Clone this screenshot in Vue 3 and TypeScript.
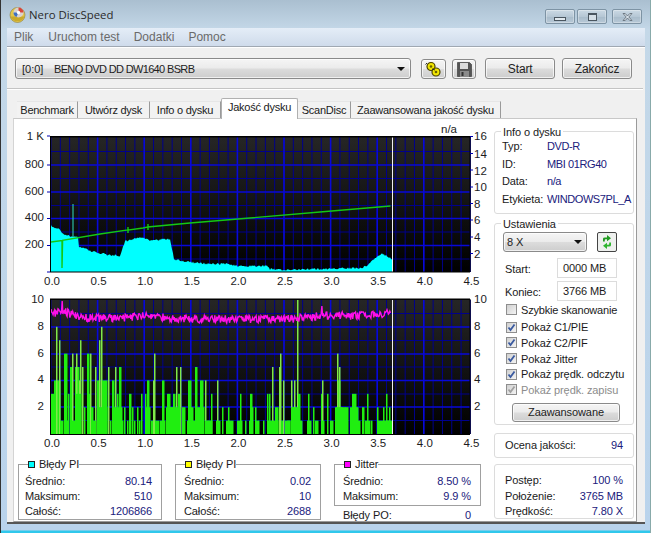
<script setup lang="ts">
import { computed } from "vue";

// cyan PI error area, page coordinates
const piOutline: [number, number][] = [
  [51, 225], [54, 226], [58, 228], [60, 229], [63, 232], [66, 234], [70, 235], [74, 236], [78, 236],
  [78.5, 246], [85, 247], [90, 250], [100, 252], [110, 254], [120, 255], [121.5, 250], [125, 240],
  [137, 237], [143, 237], [153, 240], [163, 238], [170, 238], [171.6, 246], [174, 258], [187, 261],
  [210, 263], [230, 263], [237, 265], [250, 265], [267, 265], [270, 268], [283, 269], [317, 268],
  [363, 267], [370, 262], [377, 255], [382, 253], [387, 255], [392, 258],
];

// green PIF bars as [from, to, value], x read from the plot
const pifBars: [number, number, number][] = [
  [50, 51, 2], [51, 54, 3], [54, 60, 4], [56, 57, 8], [59, 60, 7], [60, 63, 1], [64, 67, 6], [67, 68, 1], [68, 69, 3],
  [70, 72, 5], [72, 73, 6], [75, 79, 5], [76, 77, 6], [79, 80, 4], [80, 81, 7], [82, 83, 5], [84, 85, 2], [87, 89, 6],
  [89, 90, 3], [90, 91, 6], [91, 93, 2], [95, 96, 5], [97, 100, 4], [99, 100, 7], [101, 102, 8], [102, 107, 4],
  [108, 109, 5], [110, 111, 1], [112, 114, 4], [115, 116, 5], [117, 118, 3], [119, 121, 5], [122, 123, 1], [124, 125, 2],
  [127, 128, 1], [129, 131, 3], [132, 133, 2], [134, 135, 1], [137, 138, 2], [139, 140, 1], [141, 142, 3], [145, 146, 3],
  [147, 149, 4], [151, 153, 1], [153, 154, 4], [154, 155, 6], [155, 159, 1], [162, 164, 4], [167, 170, 3], [170, 175, 2],
  [173, 175, 3], [176, 177, 5], [178, 180, 3], [180, 181, 5], [182, 185, 2], [188, 191, 4], [191, 193, 2], [195, 197, 5],
  [200, 203, 4], [205, 206, 4], [207, 212, 1], [211, 212, 3], [217, 218, 4], [216, 220, 1], [222, 223, 2], [226, 233, 1],
  [228, 229, 2], [240, 241, 3], [237, 242, 1], [245, 246, 1], [249, 250, 1],
  [250, 252, 3], [252, 253, 2], [255, 256, 2], [258, 259, 1], [263, 264, 1], [267, 268, 3], [269, 270, 3], [268, 273, 1],
  [272, 273, 5], [275, 278, 2], [279, 280, 5], [280, 281, 6], [281, 283, 1], [283, 284, 4], [285, 290, 1], [291, 292, 4],
  [292, 296, 2], [294, 295, 4], [297, 298, 10], [298, 300, 3], [300, 302, 1], [307, 311, 1], [308, 309, 3], [313, 314, 2],
  [315, 318, 1], [321, 322, 3], [322, 323, 4], [322, 324, 1], [327, 328, 3], [330, 333, 1], [335, 337, 2], [337, 340, 4],
  [337, 338, 6], [339, 340, 5], [340, 342, 2], [345, 348, 2], [352, 356, 3], [356, 357, 2], [357, 360, 1], [362, 364, 2],
  [365, 370, 1], [367, 368, 3], [371, 372, 1], [377, 378, 2], [378, 383, 1], [383, 384, 2], [386, 387, 3], [389, 390, 2],
  [387, 392, 1],
  // low, dense parts between the spikes
  [75, 81, 3], [70, 75, 1], [93, 96, 1], [97, 107, 2], [112, 122, 2], [146, 150, 2], [160, 165, 1], [166, 180, 2],
  [187, 196, 1], [197, 204, 2], [205, 210, 1], [255, 258, 1], [272, 278, 1], [287, 290, 1], [291, 299, 2], [336, 345, 2],
  [350, 358, 2], [384, 390, 1],
];

const jitterMeans: [number, number][] = [
  [51, 311], [56, 313], [62, 309], [70, 313], [80, 317], [120, 317], [145, 315], [190, 318], [240, 318],
  [283, 318], [307, 317], [323, 314], [350, 315], [380, 313], [391, 312],
];

function lerp(points: [number, number][], x: number): number {
  for (let i = 1; i < points.length; i++) {
    if (x <= points[i][0]) {
      const [x0, y0] = points[i - 1];
      const [x1, y1] = points[i];
      return y0 + ((y1 - y0) * (x - x0)) / (x1 - x0);
    }
  }
  return points[points.length - 1][1];
}

let seed = 4711;
function rnd(): number {
  seed = (seed * 16807) % 2147483647;
  return seed / 2147483647;
}

const piPath = computed(() => {
  let d = "M51 271";
  for (let x = 51; x <= 392.5; x += 1) {
    d += ` L${x} ${(lerp(piOutline, x) + (rnd() - 0.5) * 2).toFixed(1)}`;
  }
  return d + " L392.5 271 Z";
});

const jitterPath = computed(() => {
  let d = "";
  for (let x = 51; x <= 391; x += 0.7) {
    let y = lerp(jitterMeans, x) + (rnd() - 0.5) * 8;
    if (Math.abs(x - 62) < 0.4) y = 300;
    if (Math.abs(x - 322) < 0.4) y = 305;
    d += `${d ? " L" : "M"}${x.toFixed(1)} ${y.toFixed(1)}`;
  }
  return d;
});

const speedPath = "M51 241 L62 239.5 L62 267 L62.6 239.4 L100 233 L128 229 L128 226 L128 232 L128 229 L143 227 L148 226 L148 223 L148 229 L148 226 L190 222 L250 217 L320 211 L390.5 205";

const xTicks = ["0.0", "0.5", "1.0", "1.5", "2.0", "2.5", "3.0", "3.5", "4.0", "4.5"].map((label, i) => ({
  label,
  x: 51 + i * 46.6,
}));
const minorX = Array.from({ length: 46 }, (_, i) => 51 + i * 9.32);

const tabs = ["Benchmark", "Utwórz dysk", "Info o dysku", "Jakość dysku", "ScanDisc", "Zaawansowana jakość dysku"];
const menu = ["Plik", "Uruchom test", "Dodatki", "Pomoc"];

const discInfo = [
  { label: "Typ:", value: "DVD-R" },
  { label: "ID:", value: "MBI 01RG40" },
  { label: "Data:", value: "n/a" },
  { label: "Etykieta:", value: "WINDOWS7PL_A" },
];

const checks = [
  { label: "Pokaż C1/PIE", off: false },
  { label: "Pokaż C2/PIF", off: false },
  { label: "Pokaż Jitter", off: false },
  { label: "Pokaż prędk. odczytu", off: false },
  { label: "Pokaż prędk. zapisu", off: true },
];

const statBoxes = [
  { title: "Błędy PI", color: "#00ffff", rows: [["Średnio:", "80.14"], ["Maksimum:", "510"], ["Całość:", "1206866"]] },
  { title: "Błędy PI", color: "#ffff00", rows: [["Średnio:", "0.02"], ["Maksimum:", "10"], ["Całość:", "2688"]] },
];
</script>

<template>
  <div class="window">
    <div class="titlebar">
      <svg class="app-icon" width="17" height="17" viewBox="0 0 17 17">
        <circle cx="8.5" cy="9" r="7.5" fill="#e3c64a" stroke="#8a7a3a" stroke-width="0.6" />
        <path d="M1.5 10.5a7.5 7.5 0 0 0 14 0z" fill="#c9a92c" />
        <circle cx="9.5" cy="6.5" r="5" fill="#d9d2cf" />
        <path d="M9.5 1.5a5 5 0 0 1 5 5h-5z" fill="#d8443a" />
        <path d="M9.5 6.5h-5a5 5 0 0 0 3 4.6z" fill="#3f6fc0" />
        <circle cx="9.5" cy="6.5" r="1.7" fill="#fff" />
      </svg>
      <span class="app-title">Nero DiscSpeed</span>
      <div class="win-buttons">
        <div class="win-btn"><span class="glyph-min"></span></div>
        <div class="win-btn"><span class="glyph-max"></span></div>
        <div class="win-btn close">
          <svg width="13" height="10" viewBox="0 0 13 10">
            <path d="M2 1.5h2.2L6.5 4l2.3-2.5H11L7.8 5 11 8.5H8.8L6.5 6 4.2 8.5H2L5.2 5z" fill="#d8e2ea" stroke="#5c6670" stroke-width="0.8" />
          </svg>
        </div>
      </div>
    </div>

    <div class="client">
      <div class="menubar">
        <span v-for="item in menu" :key="item">{{ item }}</span>
      </div>

      <div class="toolbar">
        <div class="combo drive">
          <span><span class="slot">[0:0]</span>BENQ DVD DD DW1640 BSRB</span>
          <i class="arrow"></i>
        </div>
        <button class="aero icon-btn first">
          <svg width="19" height="17" viewBox="0 0 19 17">
            <circle cx="7" cy="5.5" r="4" fill="#f2e600" stroke="#4b4300" stroke-width="1.2" />
            <circle cx="12" cy="11" r="4" fill="#f2e600" stroke="#4b4300" stroke-width="1.2" />
            <circle cx="7" cy="5.5" r="1.3" fill="#6b6200" />
            <circle cx="12" cy="11" r="1.3" fill="#6b6200" />
            <path d="M3 2 1.5 3.5M11 9l-3-1" stroke="#2c2c2c" stroke-width="1" />
          </svg>
        </button>
        <button class="aero icon-btn second">
          <svg width="15" height="15" viewBox="0 0 15 15">
            <path d="M.5.5h12l2 2v12H.5z" fill="#555" stroke="#333" stroke-width="0.6" />
            <rect x="3" y="1" width="8" height="6" fill="#dcdcdc" />
            <rect x="3" y="9" width="9" height="6" fill="#8c8c8c" />
            <rect x="4.5" y="10" width="2" height="4" fill="#333" />
          </svg>
        </button>
        <button class="aero text-btn start">Start</button>
        <button class="aero text-btn">Zakończ</button>
      </div>

      <div class="tabs">
        <div v-for="(tab, i) in tabs" :key="tab" class="tab" :class="{ active: i === 3 }">{{ tab }}</div>
      </div>

      <div class="tab-panel">
        <div class="main-col">
          <svg class="chart" width="474" height="167" viewBox="16 122 474 167">
            <defs>
              <linearGradient id="plotBg" x1="0" y1="0" x2="0" y2="1">
                <stop offset="0" stop-color="#262626" />
                <stop offset="1" stop-color="#000" />
              </linearGradient>
            </defs>
            <rect x="50" y="135" width="420" height="136" fill="url(#plotBg)" />
            <line v-for="x in minorX" :key="x" :x1="x" :x2="x" y1="136" y2="271" stroke="#00008c" />
            <line v-for="y in [150.5, 177.5, 204.5, 231, 258]" :key="y" x1="50" x2="470" :y1="y" :y2="y" stroke="#00008c" />
            <line v-for="y in [164, 191, 217.5, 244.5]" :key="y" x1="50" x2="470" :y1="y" :y2="y" stroke="#0808d8" stroke-width="1.6" />
            <line v-for="t in xTicks.slice(1, 9)" :key="t.x" :x1="t.x" :x2="t.x" y1="136" y2="271" stroke="#0808d8" stroke-width="1.6" />
            <path :d="piPath" fill="#00ffff" />
            <line x1="73" x2="73" y1="203" y2="236" stroke="#30e0c0" />
            <path :d="speedPath" fill="none" stroke="#14c814" stroke-width="1.4" />
            <line x1="392.5" x2="392.5" y1="136" y2="271" stroke="#f0f0f0" />
            <rect x="50" y="135" width="420" height="1.5" fill="#000" />
            <line x1="50" x2="470" y1="271" y2="271" stroke="#000" />
            <line x1="50.5" x2="50.5" y1="135" y2="271" stroke="#000" />
            <line x1="470" x2="470" y1="135" y2="271" stroke="#000" />
            <g class="axis" text-anchor="end">
              <text x="44" y="139">1 K</text>
              <text x="44" y="167">800</text>
              <text x="44" y="194">600</text>
              <text x="44" y="220">400</text>
              <text x="44" y="247">200</text>
            </g>
            <g class="axis" text-anchor="start">
              <text x="474" y="139">16</text>
              <text x="474" y="157">14</text>
              <text x="474" y="174">12</text>
              <text x="474" y="190">10</text>
              <text x="474" y="207">8</text>
              <text x="474" y="223">6</text>
              <text x="474" y="240">4</text>
              <text x="474" y="257">2</text>
            </g>
            <path d="M47 135h3M47 164h3M47 191h3M47 217.5h3M47 244.5h3M47 271h3M470 135.5h3M470 152.5h3M470 169h3M470 186h3M470 202.5h3M470 219h3M470 236h3M470 252.5h3" stroke="#0000b0" />
            <text class="axis" x="441" y="132">n/a</text>
            <text v-for="t in xTicks" :key="t.label" class="axis" :x="t.x + 1" y="284" text-anchor="middle">{{ t.label }}</text>
          </svg>

          <svg class="chart second" width="474" height="160" viewBox="16 290 474 160">
            <rect x="50" y="298" width="420" height="135" fill="url(#plotBg)" />
            <line v-for="x in minorX" :key="x" :x1="x" :x2="x" y1="299" y2="433" stroke="#00008c" />
            <line v-for="y in [312.5, 339.5, 366, 393, 419.5]" :key="y" x1="50" x2="470" :y1="y" :y2="y" stroke="#00008c" />
            <line v-for="y in [326, 353, 379.5, 406]" :key="y" x1="50" x2="470" :y1="y" :y2="y" stroke="#0808d8" stroke-width="1.6" />
            <line v-for="t in xTicks.slice(1, 9)" :key="t.x" :x1="t.x" :x2="t.x" y1="299" y2="433" stroke="#0808d8" stroke-width="1.6" />
            <rect
              v-for="(b, i) in pifBars"
              :key="i"
              :x="b[0]"
              :y="433 - b[2] * 13.4"
              :width="b[1] - b[0] + 0.5"
              :height="b[2] * 13.4"
              :fill="b[1] - b[0] === 1 && b[2] > 3 ? '#7fe84a' : '#20ee10'"
            />
            <path :d="jitterPath" fill="none" stroke="#ff10e8" stroke-width="1.4" />
            <line x1="392.5" x2="392.5" y1="298" y2="433" stroke="#f0f0f0" />
            <rect x="50" y="297.5" width="420" height="1.5" fill="#000" />
            <line x1="50" x2="470" y1="433.5" y2="433.5" stroke="#000" />
            <line x1="50.5" x2="50.5" y1="298" y2="433" stroke="#000" />
            <line x1="470" x2="470" y1="298" y2="433" stroke="#000" />
            <g class="axis" text-anchor="end">
              <text x="44" y="302">10</text>
              <text x="44" y="329">8</text>
              <text x="44" y="356">6</text>
              <text x="44" y="382">4</text>
              <text x="44" y="409">2</text>
            </g>
            <g class="axis" text-anchor="start">
              <text x="474" y="302">10</text>
              <text x="474" y="329">8</text>
              <text x="474" y="356">6</text>
              <text x="474" y="382">4</text>
              <text x="474" y="409">2</text>
            </g>
            <text v-for="t in xTicks" :key="t.label" class="axis" :x="t.x + 1" y="446" text-anchor="middle">{{ t.label }}</text>
          </svg>

          <div class="stats">
            <div v-for="box in statBoxes" :key="box.color" class="stat-box">
              <div class="legend"><i :style="{ background: box.color }"></i>{{ box.title }}</div>
              <div v-for="row in box.rows" :key="row[0]" class="row">
                <span>{{ row[0] }}</span><b>{{ row[1] }}</b>
              </div>
            </div>
            <div class="jitter-col">
              <div class="stat-box jitter">
                <div class="legend"><i class="jitter-swatch"></i>Jitter</div>
                <div class="row"><span>Średnio:</span><b>8.50 %</b></div>
                <div class="row"><span>Maksimum:</span><b>9.9 %</b></div>
              </div>
              <div class="row po"><span>Błędy PO:</span><b>0</b></div>
            </div>
          </div>
        </div>

        <div class="side-col">
          <div class="group info">
            <div class="group-title">Info o dysku</div>
            <div v-for="row in discInfo" :key="row.label" class="info-row">
              <span>{{ row.label }}</span><b>{{ row.value }}</b>
            </div>
          </div>

          <div class="group settings">
            <div class="group-title">Ustawienia</div>
            <div class="speed-row">
              <div class="combo speed"><span>8 X</span><i class="arrow"></i></div>
              <button class="refresh">
                <svg width="14" height="16" viewBox="0 0 14 16">
                  <path d="M3 7.5V4.8Q3 3.5 5 3.5H7V1L11 4.2 7 7.2V5.2H5.5Q4.8 5.2 4.8 6V7.5z" fill="#1f9a1f" />
                  <path d="M11 8.5V11.2Q11 12.5 9 12.5H7V15L3 11.8 7 8.8V10.8H8.5Q9.2 10.8 9.2 10V8.5z" fill="#2fb52f" />
                </svg>
              </button>
            </div>
            <div class="range-row"><span>Start:</span><div class="field">0000 MB</div></div>
            <div class="range-row"><span>Koniec:</span><div class="field">3766 MB</div></div>
            <label class="check fast"><i class="box"></i>Szybkie skanowanie</label>
            <div class="check-list">
              <label v-for="c in checks" :key="c.label" class="check" :class="{ disabled: c.off }">
                <i class="box">
                  <svg width="9" height="9" viewBox="0 0 9 9"><path d="M1.5 4.5 3.5 7 7.5 1.5" fill="none" stroke-width="1.8" /></svg>
                </i>{{ c.label }}
              </label>
            </div>
            <button class="aero advanced">Zaawansowane</button>
          </div>

          <div class="group score">
            <div class="row"><span>Ocena jakości:</span><b>94</b></div>
          </div>

          <div class="group progress">
            <div class="row"><span>Postęp:</span><b>100 %</b></div>
            <div class="row"><span>Położenie:</span><b>3765 MB</b></div>
            <div class="row"><span>Prędkość:</span><b>7.80 X</b></div>
          </div>
        </div>
      </div>
    </div>
  </div>
</template>

<style>
html,
body {
  margin: 0;
  background: #b9d1e8;
}
</style>

<style scoped>
.window {
  width: 651px;
  height: 533px;
  box-sizing: border-box;
  padding: 0 5px 9px 6px;
  display: flex;
  flex-direction: column;
  background: linear-gradient(#aabfd0 0, #c4d8e8 30px, #b9d3ec 530px, #30c8ec 531px);
  font-family: "Liberation Sans", Arial, sans-serif;
  font-size: 11px;
  letter-spacing: -0.1px;
  color: #1a1a1a;
  overflow: hidden;
  border-left: 1px solid #333;
  border-right: 1px solid #8aa;
}

.titlebar {
  height: 28px;
  flex: none;
  display: flex;
  align-items: center;
  position: relative;
}

.app-icon {
  margin: 0 3px 0 2px;
}

.app-title {
  font-size: 11.4px;
  letter-spacing: 0;
  color: #2a2a2a;
  font-family: "Open Sans", "Liberation Sans", sans-serif;
}

.win-buttons {
  margin-left: auto;
  display: flex;
  gap: 2px;
  margin-right: 3px;
  margin-top: 5px;
}

.win-btn {
  width: 28px;
  height: 13px;
  border: 1px solid #7d93a4;
  border-radius: 2px;
  background: linear-gradient(#cbd9e4, #b6c7d5 50%, #a9bccb 55%, #b8c9d7);
  display: flex;
  align-items: center;
  justify-content: center;
  box-shadow: inset 0 0 0 1px rgba(255, 255, 255, 0.3);
}

.win-btn.close {
  margin-left: 3px;
}

.glyph-min {
  width: 10px;
  height: 2px;
  margin-top: 5px;
  background: #e0e8ee;
  border: 1px solid #4a5660;
}

.glyph-max {
  width: 7px;
  height: 5px;
  border: 1px solid #4a5660;
  border-top-width: 2px;
  background: #d5dfe7;
}

.client {
  flex: 1;
  background: #f0f0f0;
  display: flex;
  flex-direction: column;
  border-bottom: 2px solid #555;
  min-height: 0;
}

.menubar {
  height: 18px;
  flex: none;
  display: flex;
  gap: 14px;
  align-items: center;
  padding-left: 7px;
  background: linear-gradient(#e4edf7, #cfdbeb);
  border-bottom: 1px solid #a0a8b2;
  box-shadow: 0 1px 0 #fff;
  color: #6a6a6a;
  font-size: 12px;
  letter-spacing: 0;
}

.menubar span:first-child {
  margin-right: 1px;
}

.toolbar {
  height: 42px;
  flex: none;
  box-sizing: border-box;
  display: flex;
  align-items: center;
  padding: 0 11px 0 8px;
  border-bottom: 1px solid #c4c4c4;
  box-shadow: 0 1px 0 #fff;
  margin-right: 2px;
}

.aero,
.combo {
  border: 1px solid #8a8a8a;
  border-radius: 3px;
  background: linear-gradient(#f5f5f5 0, #ebebeb 48%, #dcdcdc 52%, #cdcdcd 100%);
  box-shadow: inset 0 0 0 1px rgba(255, 255, 255, 0.7);
  box-sizing: border-box;
  font: inherit;
  letter-spacing: inherit;
  color: #222;
  padding: 0;
}

.combo {
  display: flex;
  align-items: center;
  justify-content: space-between;
  padding: 0 5px 0 6px;
}

.drive {
  width: 397px;
  height: 21px;
  margin-top: 2px;
  letter-spacing: -0.65px;
}

.slot {
  display: inline-block;
  letter-spacing: 0;
  width: 32px;
}

.arrow {
  width: 0;
  height: 0;
  border-left: 4px solid transparent;
  border-right: 4px solid transparent;
  border-top: 4px solid #111;
}

.icon-btn {
  width: 25px;
  height: 20px;
  margin-left: 10px;
  margin-top: 3px;
  display: flex;
  align-items: center;
  justify-content: center;
}

.icon-btn.second {
  width: 24px;
  margin-left: 6px;
}

.text-btn {
  width: 70px;
  height: 21px;
  margin-left: 7px;
  margin-top: 2px;
  font-size: 12px;
}

.text-btn.start {
  margin-left: 9px;
}

.tabs {
  height: 29px;
  flex: none;
  box-sizing: border-box;
  display: flex;
  align-items: flex-end;
  padding-left: 10px;
}

.tab {
  height: 17px;
  box-sizing: border-box;
  border-right: 1px solid #9a9a9a;
  border-top: 1px solid #e6e6e6;
  background: #f2f2f2;
  line-height: 16px;
  letter-spacing: -0.25px;
  white-space: nowrap;
  text-align: center;
}

.tab:nth-child(1) { width: 61px; }
.tab:nth-child(2) { width: 72px; }
.tab:nth-child(3) { width: 71px; }
.tab:nth-child(4) { width: 77px; }
.tab:nth-child(5) { width: 53px; }
.tab:nth-child(6) { width: 150px; }

.tab.active {
  height: 21px;
  background: #fff;
  border: 1px solid #b0b0b0;
  border-bottom: 0;
  border-radius: 2px 2px 0 0;
  line-height: 17px;
  margin-bottom: -1px;
  position: relative;
  z-index: 1;
}

.tab-panel {
  flex: 1;
  min-height: 0;
  margin: 0 8px 0 6px;
  background: #fff;
  border-top: 1px solid #c8c8c8;
  border-left: 1px solid #d4d4d4;
  border-right: 1px solid #9a9a9a;
  border-bottom: 1px solid #9a9a9a;
  display: flex;
  position: relative;
  box-sizing: border-box;
}

.main-col {
  width: 476px;
  flex: none;
}

.chart {
  display: block;
  margin-top: 4px;
  margin-left: 2px;
}

.chart.second {
  margin-top: 1px;
}

.axis,
.axis text {
  font-family: "Liberation Sans", Arial, sans-serif;
  font-size: 11.5px;
  letter-spacing: 0;
  fill: #1c1c1c;
}

.stats {
  display: flex;
  gap: 13px;
  margin: 13px 0 0 4px;
  align-items: flex-start;
}

.stat-box {
  position: relative;
  box-sizing: border-box;
  width: 144px;
  height: 56px;
  border: 1px solid #a0a0a0;
  padding: 9px 9px 0 6px;
}

.stat-box:nth-child(2) {
  width: 146px;
  padding-left: 8px;
}

.legend {
  position: absolute;
  top: -8px;
  left: 9px;
  background: #fff;
  display: flex;
  align-items: center;
  line-height: 15px;
}

.legend i {
  width: 5px;
  height: 5px;
  border: 1px solid #222;
  margin-right: 4px;
}

.jitter-swatch {
  background: #ff00ff;
}

.row {
  display: flex;
  justify-content: space-between;
  height: 15px;
  line-height: 15px;
}

.row b {
  font-weight: 400;
  color: #20207c;
}

.jitter-col {
  width: 147px;
}

.stat-box.jitter {
  width: 147px;
  height: 42px;
  padding-left: 8px;
}

.row.po {
  margin-top: 2px;
  padding: 0 10px 0 9px;
}

.side-col {
  width: 140px;
  margin-left: 4px;
  display: flex;
  flex-direction: column;
}

.group {
  position: relative;
  box-sizing: border-box;
  border: 1px solid #dcdcdc;
  border-radius: 3px;
}

.group-title {
  position: absolute;
  top: -7px;
  left: 6px;
  background: #fff;
  padding: 0 2px;
  line-height: 14px;
}

.info {
  height: 83px;
  margin-top: 12px;
  padding: 6px 0 0 7px;
}

.info-row {
  height: 17.5px;
  line-height: 17.5px;
  display: flex;
  white-space: nowrap;
}

.info-row span {
  width: 45px;
  flex: none;
}

.info-row b {
  font-weight: 400;
  color: #20207c;
  letter-spacing: -0.4px;
}

.settings {
  height: 202px;
  margin-top: 9px;
  padding: 8px 0 0 8px;
}

.speed-row {
  display: flex;
  align-items: center;
}

.speed {
  width: 84px;
  height: 20px;
  padding: 0 4px 0 3px;
}

.refresh {
  width: 20px;
  height: 20px;
  margin-left: 10px;
  box-sizing: border-box;
  padding: 0;
  border: 1px solid #444;
  border-radius: 2px;
  background: #eef0ee;
  display: flex;
  align-items: center;
  justify-content: center;
}

.range-row {
  height: 23px;
  display: flex;
  justify-content: space-between;
  padding: 0 16px 0 2px;
}

.range-row span {
  margin-top: 5px;
}

.speed-row + .range-row {
  margin-top: 6px;
}

.field {
  width: 60px;
  height: 20px;
  box-sizing: border-box;
  border: 1px solid #dcdcdc;
  line-height: 18px;
  padding-left: 5px;
}

.check {
  display: flex;
  align-items: center;
  height: 15.6px;
  gap: 4px;
  padding-left: 3px;
  letter-spacing: -0.1px;
}

.box {
  width: 11px;
  height: 11px;
  box-sizing: border-box;
  border: 1px solid #8e8e8e;
  background: linear-gradient(135deg, #d0d0d0, #f4f4f4);
  display: flex;
  align-items: center;
  justify-content: center;
}

.box svg path {
  stroke: #3a5aa0;
}

.fast {
  margin-top: -2px;
  letter-spacing: -0.2px;
}

.check-list {
  margin-top: 2px;
}

.disabled {
  color: #8c8c8c;
}

.disabled .box svg path {
  stroke: #a0a0a0;
}

.advanced {
  display: block;
  width: 108px;
  height: 19px;
  margin: 5px 0 0 9px;
}

.score {
  height: 25px;
  margin-top: 8px;
  padding: 0 10px;
  display: flex;
  flex-direction: column;
  justify-content: center;
}

.progress {
  height: 55px;
  margin-top: 6px;
  padding: 8px 10px 0;
}

.progress .row {
  height: 15.5px;
}
</style>
